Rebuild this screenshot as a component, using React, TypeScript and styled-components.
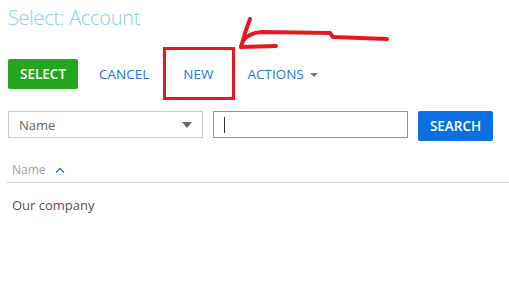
import styled, { createGlobalStyle } from 'styled-components';

const GlobalStyle = createGlobalStyle`
  * {
    box-sizing: border-box;
  }

  body {
    margin: 0;
    background: #ffffff;
    font-family: "Open Sans", "Liberation Sans", sans-serif;
  }
`;

const Page = styled.div`
  position: relative;
  width: 509px;
  height: 283px;
  overflow: hidden;
  padding: 4px 0 0 8px;
`;

const Title = styled.h1`
  margin: 0;
  font-size: 20px;
  line-height: 28px;
  font-weight: 300;
  letter-spacing: -0.3px;
  color: #8dc9ec;
`;

const Toolbar = styled.div`
  margin-top: 27px;
  display: flex;
  align-items: center;
  gap: 8px;
  height: 30px;
`;

const PrimaryButton = styled.button<{ $color: string }>`
  height: 30px;
  padding: 0 12px;
  border: none;
  border-radius: 2px;
  background: ${(p) => p.$color};
  color: #ffffff;
  font-family: inherit;
  font-size: 13.5px;
  font-weight: 600;
`;

const LinkButton = styled.button`
  position: relative;
  height: 30px;
  padding: 0 13px;
  border: none;
  background: transparent;
  color: #2276d9;
  font-family: inherit;
  font-size: 13.5px;
  display: flex;
  align-items: center;
  gap: 6px;
`;

const Highlight = styled.span`
  position: absolute;
  left: -7px;
  right: -9px;
  top: -12px;
  bottom: -11px;
  border: 3px solid #e5171f;
`;

const Caret = styled.span`
  width: 0;
  height: 0;
  border-left: 4px solid transparent;
  border-right: 4px solid transparent;
  border-top: 4px solid #5e7ea6;
  margin-top: 1px;
`;

const SearchRow = styled.div`
  margin-top: 22px;
  display: flex;
  align-items: flex-start;
  gap: 10px;
`;

const Field = styled.div<{ $focused?: boolean }>`
  width: 195px;
  height: 27px;
  border: 1px solid ${(p) => (p.$focused ? '#4eaae6' : '#c9c9c9')};
  display: flex;
  align-items: center;
  justify-content: space-between;
  padding: 0 10px;
  font-size: 13px;
  color: #666666;
`;

const Cursor = styled.span`
  width: 1px;
  height: 16px;
  background: #333333;
`;

const SearchButton = styled(PrimaryButton)`
  width: 75px;
  padding: 0;
`;

const Grid = styled.div`
  margin: 16px 0 0 -2px;
`;

const HeaderRow = styled.div`
  height: 26px;
  padding-left: 6px;
  display: flex;
  align-items: center;
  gap: 9px;
  font-size: 12px;
  color: #a0a0a0;
  border-bottom: 1px solid #dedede;
`;

const Row = styled.div`
  height: 44px;
  padding-left: 6px;
  display: flex;
  align-items: center;
  font-size: 13px;
  color: #505050;
`;

const Annotation = styled.svg`
  position: absolute;
  left: 0;
  top: 0;
  pointer-events: none;
`;

export default function App() {
  return (
    <Page>
      <GlobalStyle />
      <Title>Select: Account</Title>
      <Toolbar>
        <PrimaryButton $color="#25a61f">SELECT</PrimaryButton>
        <LinkButton>CANCEL</LinkButton>
        <LinkButton>
          NEW
          <Highlight />
        </LinkButton>
        <LinkButton>
          ACTIONS
          <Caret />
        </LinkButton>
      </Toolbar>
      <SearchRow>
        <Field>
          Name
          <svg width="10" height="6" viewBox="0 0 10 6">
            <path d="M0 0h10L5 6z" fill="#666666" />
          </svg>
        </Field>
        <Field $focused>
          <Cursor />
        </Field>
        <SearchButton $color="#0a6fe0">SEARCH</SearchButton>
      </SearchRow>
      <Grid>
        <HeaderRow>
          Name
          <svg width="10" height="6" viewBox="0 0 10 6">
            <path d="M1 5.5L5 1.5L9 5.5" fill="none" stroke="#2d6fd0" strokeWidth="1.4" />
          </svg>
        </HeaderRow>
        <Row>Our company</Row>
      </Grid>
      <Annotation width="509" height="283" viewBox="0 0 509 283">
        <g fill="none" stroke="#e5171f" strokeWidth="4" strokeLinecap="round" strokeLinejoin="round">
          <path d="M250 19 L246 30 L241 47" />
          <path d="M241 47 L276 46" />
          <path d="M243 41 Q248 33 262 32 L330 33 L333 37 L387 39" />
        </g>
      </Annotation>
    </Page>
  );
}
